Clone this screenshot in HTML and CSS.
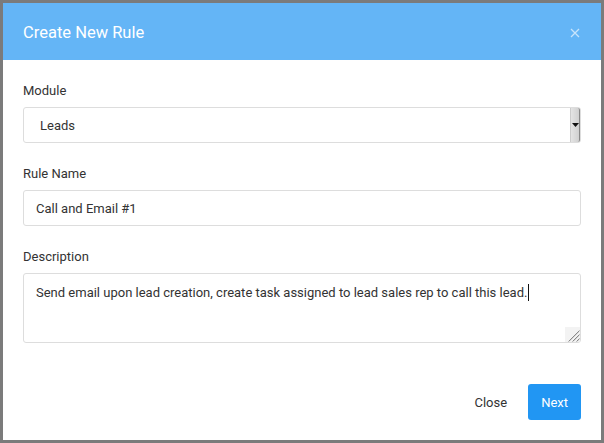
FILE: index.html
```html
<!DOCTYPE html>
<html>
<head>
<meta charset="utf-8">
<link rel="stylesheet" href="styles.css">
</head>
<body>
<div class="backdrop">
  <div class="modal">
    <div class="modal-header">
      <span class="modal-title">Create New Rule</span>
      <svg class="close-x" width="10" height="10" viewBox="0 0 10 10"><path d="M1 1L9 9M9 1L1 9" stroke="#c8e4fb" stroke-width="1.3"/></svg>
    </div>
    <div class="modal-body">
      <div class="field">
        <label class="label">Module</label>
        <div class="select">
          <span class="select-text">Leads</span>
          <span class="select-btn"><svg width="7" height="4" viewBox="0 0 7 4"><path d="M0 0H7L3.5 4Z" fill="#111"/></svg></span>
        </div>
      </div>
      <div class="field">
        <label class="label">Rule Name</label>
        <div class="input">Call and Email #1</div>
      </div>
      <div class="field">
        <label class="label">Description</label>
        <div class="textarea">Send email upon lead creation, create task assigned to lead sales rep to call this lead.<span class="caret"></span>
          <svg class="grip" width="15" height="15" viewBox="0 0 15 15"><rect width="15" height="15" fill="#f3f3f3"/><path d="M14.5 3.5L3.5 14.5M14.5 7.5L7.5 14.5M14.5 11.5L11.5 14.5" stroke="#8a8a8a" stroke-width="1"/><path d="M14.5 4.5L4.5 14.5M14.5 8.5L8.5 14.5M14.5 12.5L12.5 14.5" stroke="#d8d8d8" stroke-width="1"/></svg>
        </div>
      </div>
    </div>
    <div class="modal-footer">
      <button class="btn btn-link">Close</button>
      <button class="btn btn-primary">Next</button>
    </div>
  </div>
</div>
</body>
</html>
```
FILE: styles.css
```css
html, body {
  margin: 0;
  padding: 0;
}
body {
  background: #7b7b7b;
  font-family: Roboto, "Liberation Sans", sans-serif;
  font-size: 13px;
  color: #333;
  width: 604px;
  height: 443px;
  overflow: hidden;
}
.backdrop {
  padding: 3px 3px 0 3px;
}
.modal {
  width: 598px;
  height: 437px;
  background: #fff;
  display: flex;
  flex-direction: column;
}
.modal-header {
  height: 57px;
  background: #64b5f6;
  display: flex;
  align-items: center;
  justify-content: space-between;
  padding: 0 20px;
  box-sizing: border-box;
}
.modal-title {
  color: #fff;
  font-size: 16.5px;
  padding-top: 1px;
}
.close-x {
  margin-right: 1px;
  margin-top: 2px;
}
.modal-body {
  padding: 21px 20px 0 20px;
  display: flex;
  flex-direction: column;
  gap: 21px;
}
.field {
  display: flex;
  flex-direction: column;
  gap: 8px;
}
.label {
  box-sizing: border-box;
  height: 18px;
  padding-top: 2px;
  line-height: 16px;
}
.select, .input, .textarea {
  border: 1px solid #ddd;
  border-radius: 3px;
  box-sizing: border-box;
  color: #333;
}
.select {
  height: 36px;
  display: flex;
  align-items: center;
  justify-content: space-between;
  padding-left: 16px;
}
.select-btn {
  width: 10px;
  height: 34px;
  background: linear-gradient(to right, #e4e4e4, #d0d0d0);
  border-left: 1px solid #ccc;
  border-right: 1px solid #888;
  box-sizing: border-box;
  display: flex;
  align-items: center;
  justify-content: center;
  border-radius: 0 2px 2px 0;
}
.input {
  height: 36px;
  display: flex;
  align-items: center;
  padding-left: 12px;
}
.textarea {
  height: 70px;
  padding: 10px 12px;
  line-height: 18px;
  position: relative;
}
.caret {
  display: inline-block;
  width: 1px;
  height: 17px;
  background: #111;
  vertical-align: -4px;
  margin-left: 1px;
}
.grip {
  position: absolute;
  right: 0;
  bottom: 0;
  border-bottom-right-radius: 2px;
}
.modal-footer {
  margin-top: auto;
  padding: 0 20px 20px 20px;
  display: flex;
  justify-content: flex-end;
  align-items: center;
  gap: 8px;
}
.btn {
  font-family: Roboto, "Liberation Sans", sans-serif;
  font-size: 13px;
  height: 36px;
  border: none;
  border-radius: 3px;
  padding: 0 13px;
  background: none;
  cursor: pointer;
}
.btn-link {
  color: #333;
}
.btn-primary {
  background: #2196f3;
  color: #fff;
}
```
